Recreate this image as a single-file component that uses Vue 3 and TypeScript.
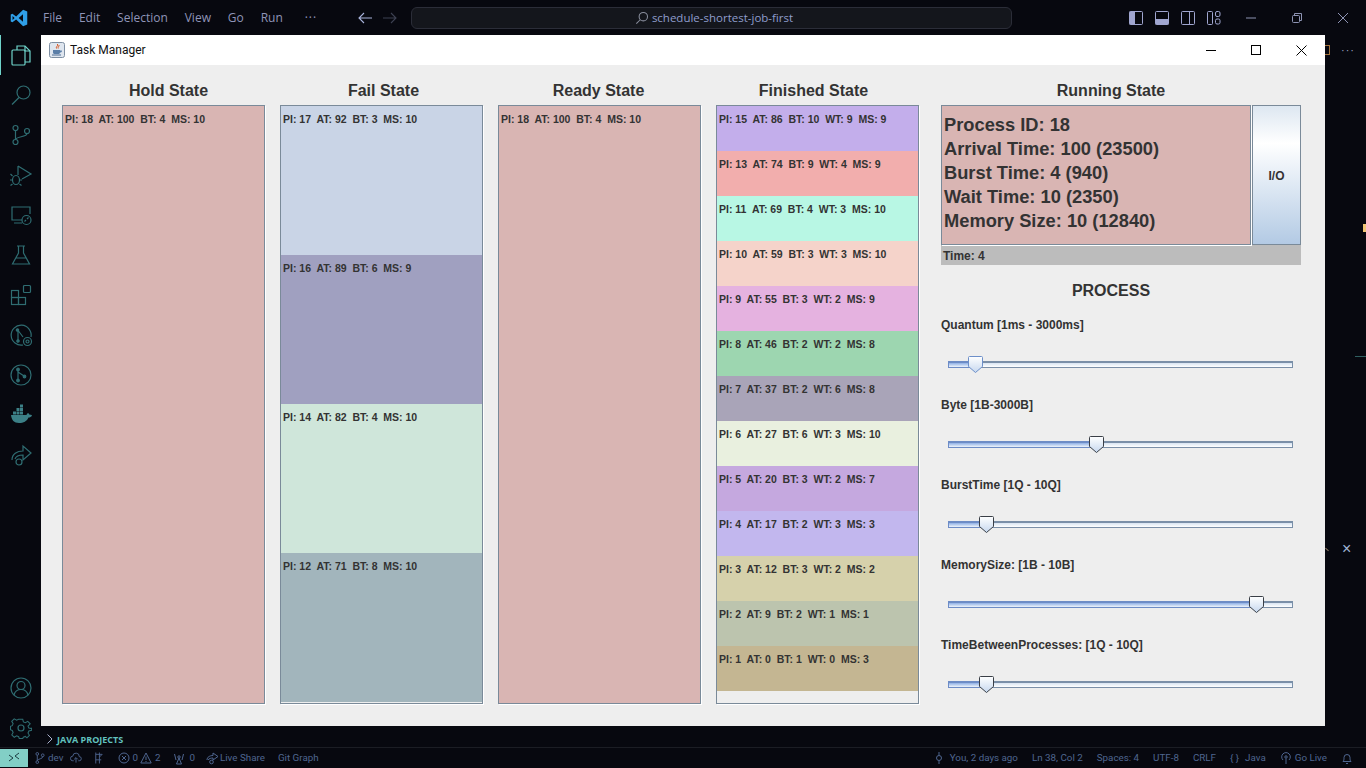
<template>
  <div class="desktop">
    <header class="topbar">
      <svg class="vs-logo" width="18" height="18" viewBox="0 0 24 24">
        <path fill="#2f9fe8" d="M17.5 1 8.200 10 3.200 6.200 1 7.400v9.200l2.200 1.200 5-3.800 9.300 9L23 20.800V3.200L17.500 1ZM3.400 14.800V9.200L6.200 12l-2.800 2.800ZM17.300 17 11.600 12l5.700-5v10Z" />
      </svg>
      <nav class="menu">
        <span v-for="m in menus" :key="m">{{ m }}</span>
        <span class="more">···</span>
      </nav>
      <div class="arrows">
        <svg width="16" height="16" viewBox="0 0 16 16" fill="none" stroke="#a9b4dc" stroke-width="1.1"><path d="M15 8H2M7 3 2 8l5 5" /></svg>
        <svg width="16" height="16" viewBox="0 0 16 16" fill="none" stroke="#3d4152" stroke-width="1.1"><path d="M1 8h13M9 3l5 5-5 5" /></svg>
      </div>
      <div class="command">
        <svg width="14" height="14" viewBox="0 0 16 16" fill="none" stroke="#8a8f9e" stroke-width="1.2"><circle cx="9.500" cy="6.500" r="4.800" /><path d="M6 10 1.500 14.500" /></svg>
        <span>schedule-shortest-job-first</span>
      </div>
      <div class="layout-icons">
        <svg width="16" height="16" viewBox="0 0 16 16"><rect x="1.500" y="1.500" width="13" height="13" rx="1" fill="none" stroke="#a0a6d0" /><rect x="1.500" y="1.500" width="5.500" height="13" fill="#a0a6d0" /></svg>
        <svg width="16" height="16" viewBox="0 0 16 16"><rect x="1.500" y="1.500" width="13" height="13" rx="1" fill="none" stroke="#a0a6d0" /><rect x="1.500" y="9" width="13" height="5.500" fill="#a0a6d0" /></svg>
        <svg width="16" height="16" viewBox="0 0 16 16" fill="none" stroke="#a0a6d0"><rect x="1.500" y="1.500" width="13" height="13" rx="1" /><path d="M9.500 1.500v13" /></svg>
        <svg width="16" height="16" viewBox="0 0 16 16" fill="none" stroke="#a0a6d0"><rect x="1.500" y="1.500" width="5" height="13" rx="1" /><rect x="9.500" y="1.500" width="4.500" height="5" rx="1.500" /><rect x="9.500" y="9" width="4.500" height="5" rx="1.500" /></svg>
      </div>
      <div class="win-controls">
        <svg width="12" height="12" viewBox="0 0 12 12" stroke="#8d93b3" fill="none"><path d="M1 6h10" /></svg>
        <svg width="12" height="12" viewBox="0 0 12 12" stroke="#8d93b3" fill="none"><rect x="1.500" y="3.500" width="7" height="7" rx="1" /><path d="M3.500 3V1.500h7v7H9" /></svg>
        <svg width="12" height="12" viewBox="0 0 12 12" stroke="#8d93b3" fill="none"><path d="m1 1 10 10M11 1 1 11" /></svg>
      </div>
    </header>

    <div class="middle">
      <aside class="activity">
        <div class="activity-top">
          <div class="act act-active">
            <svg width="24" height="24" viewBox="0 0 24 24" fill="none" stroke="#6fd3ca" stroke-width="1.200"><path d="M8 7V3h8l5 5v11h-5" /><path d="M16 3v5h5" /><rect x="3" y="7" width="13" height="15" rx="1" /></svg>
          </div>
          <div class="act"><svg width="24" height="24" viewBox="0 0 24 24" fill="none" stroke="#2f6d72" stroke-width="1.200"><circle cx="14.500" cy="9.500" r="6.500" /><path d="M10 14.500 3 21.500" /></svg></div>
          <div class="act"><svg width="24" height="24" viewBox="0 0 24 24" fill="none" stroke="#2f6d72" stroke-width="1.200"><circle cx="6.500" cy="5" r="2.500" /><circle cx="6.500" cy="19" r="2.500" /><circle cx="18" cy="8" r="2.500" /><path d="M6.500 7.500v9M18 10.500c0 4-11 2.500-11 6" /></svg></div>
          <div class="act"><svg width="24" height="24" viewBox="0 0 24 24" fill="none" stroke="#2f6d72" stroke-width="1.200"><path d="M9 3v9M9 3l13 8-9 5" /><ellipse cx="7" cy="17" rx="3.500" ry="4.500" /><path d="M3.500 17H1M3.500 13 1.500 11M3.500 21l-2 1.500M10.500 17H13M10.500 21l2 1.500" /></svg></div>
          <div class="act"><svg width="24" height="24" viewBox="0 0 24 24" fill="none" stroke="#2f6d72" stroke-width="1.200"><path d="M13 17H3V4h18v7M5 20h8" /><circle cx="17.500" cy="17" r="4.500" /><path d="m15.500 18.500 1.500-1.500m1-1 1.500-1.500" /></svg></div>
          <div class="act"><svg width="24" height="24" viewBox="0 0 24 24" fill="none" stroke="#2f6d72" stroke-width="1.200"><path d="M8 3h8M9.500 3v7L3.500 21h17l-6-11V3M7 15h10" /></svg></div>
          <div class="act"><svg width="24" height="24" viewBox="0 0 24 24" fill="none" stroke="#2f6d72" stroke-width="1.200"><rect x="2.500" y="7.500" width="7" height="7" /><rect x="2.500" y="14.500" width="7" height="7" /><rect x="9.500" y="14.500" width="7" height="7" /><rect x="14.500" y="2.500" width="7" height="7" rx="1" /></svg></div>
          <div class="act"><svg width="24" height="24" viewBox="0 0 24 24" fill="none" stroke="#2f6d72" stroke-width="1.200"><path d="M14 22a10 10 0 1 1 8-8" /><path d="m8 6 6 8M9 8v10" /><circle cx="8.500" cy="7" r="1.200" fill="#2f6d72" /><circle cx="9" cy="18" r="1.200" fill="#2f6d72" /><circle cx="18.500" cy="18.500" r="4" /><circle cx="18.500" cy="18.500" r="1.500" /></svg></div>
          <div class="act"><svg width="24" height="24" viewBox="0 0 24 24" fill="none" stroke="#2f6d72" stroke-width="1.200"><circle cx="12" cy="12" r="10" /><path d="M9 6v12M9 9l6 4" /><circle cx="9" cy="6.500" r="1.300" fill="#2f6d72" /><circle cx="9" cy="17.500" r="1.300" fill="#2f6d72" /><circle cx="15.500" cy="13.500" r="1.300" fill="#2f6d72" /></svg></div>
          <div class="act"><svg width="24" height="24" viewBox="0 0 24 24"><path fill="#3c8087" d="M2 12h15.500c.4-1.500 1.200-2 2-1.700.6.3.9.9 1 1.500 1 0 2 .1 2.500.6-.8 1.500-2 2-3.500 2C18 18 14.500 20 10 20c-5 0-7.500-3-8-8Z" /><path fill="#3c8087" d="M4 8.500h3v3H4zM7.500 8.500h3v3h-3zM11 8.500h3v3h-3zM7.500 5h3v3h-3zM11 5h3v3h-3zM11 1.500h3V4.500h-3z" /></svg></div>
          <div class="act"><svg width="24" height="24" viewBox="0 0 24 24" fill="none" stroke="#2f6d72" stroke-width="1.200"><path d="M3 17c0-6 5-9 11-9V3l8 7-8 7v-5c-4 0-7 1-8 4" /><circle cx="10" cy="19" r="3" /></svg></div>
        </div>
        <div class="activity-bottom">
          <div class="act"><svg width="24" height="24" viewBox="0 0 24 24" fill="none" stroke="#2f6d72" stroke-width="1.200"><circle cx="12" cy="12" r="10" /><circle cx="12" cy="9.500" r="4" /><path d="M5 19c1-4 4-5.500 7-5.500s6 1.500 7 5.500" /></svg></div>
          <div class="act"><svg width="24" height="24" viewBox="0 0 24 24" fill="none" stroke="#2f6d72" stroke-width="1.200"><circle cx="12" cy="12" r="3" /><path d="M10 2h4l.7 3 2.300 1 2.700-1.600 2.800 2.800L20 9.900l1 2.100 3 .7v-1 3l-3 .7-1 2.300 1.600 2.700-2.800 2.800L17 21.600l-2.300 1L14 24h-4l-.7-2-2.300-1-2.700 1.600-2.800-2.800L3 17.100 2 14.800 0 14v-4l2-.7 1-2.300L1.400 4.300l2.800-2.800L7 3.100l2.300-1L10 2Z" transform="translate(1.500 1.500) scale(.875)" /></svg></div>
        </div>
      </aside>

      <div class="editor-bg">
        <div class="side-remnants">
          <div class="tab-icons"><span class="bracket"></span><span class="dots">···</span></div>
          <div class="yellow-mark"></div>
          <div class="dash-mark"></div>
          <div class="panel-close"><span class="caret"></span><span class="close-x">×</span></div>
        </div>
        <div class="java-label">
          <svg width="7" height="10" viewBox="0 0 7 10" fill="none" stroke="#a9b0cc"><path d="m1.500 .5 4.500 4.500-4.500 4.500" /></svg>
          <span>JAVA PROJECTS</span>
        </div>
      </div>
    </div>

    <footer class="statusbar">
      <div class="remote">
        <svg width="12" height="12" viewBox="0 0 12 12" fill="none" stroke="#1b3d42" stroke-width="1"><path d="m1 9 4-3-4-3M11 1 7 4l4 3" /></svg>
      </div>
      <div class="status-left">
        <span class="st s-dev"><svg width="10" height="14" viewBox="0 0 11 14" fill="none" stroke="#4f6690"><circle cx="2.500" cy="2.500" r="1.500" /><circle cx="2.500" cy="11.500" r="1.500" /><circle cx="8.500" cy="4" r="1.500" /><path d="M2.500 4v6M8.500 5.500c0 3-5.500 2-6 4.500" /></svg>dev</span>
        <span class="st s-cloud"><svg width="12" height="12" viewBox="0 0 13 12" fill="none" stroke="#4f6690"><path d="M4 9H3a2.500 2.500 0 0 1 0-5 3.500 3.500 0 0 1 7 .5 2.200 2.200 0 0 1 0 4.500H9M6.500 11V6M4.500 7.500l2-2 2 2" /></svg></span>
        <span class="st s-flag"><svg width="11" height="14" viewBox="0 0 12 14" fill="none" stroke="#4f6690"><path d="M3 1v12M7 1v12M3 3h7l-3 3M3 9h6" /></svg></span>
        <span class="st s-err"><svg width="12" height="12" viewBox="0 0 12 12" fill="none" stroke="#4f6690"><circle cx="6" cy="6" r="5" /><path d="m4 4 4 4M8 4 4 8" /></svg>0<svg class="warn" width="12" height="12" viewBox="0 0 12 12" fill="none" stroke="#4f6690"><path d="M6 1 .8 11h10.400L6 1ZM6 4.500V8M6 9v1" /></svg>2</span>
        <span class="st s-ant"><svg width="12" height="13" viewBox="0 0 12 13" fill="none" stroke="#4f6690"><circle cx="6" cy="5" r="1.200" /><path d="M3 8 1.500 2M9 8l1.500-6M6 6 3.500 12h5L6 6Z" /></svg>0</span>
        <span class="st s-share"><svg width="13" height="13" viewBox="0 0 13 13" fill="none" stroke="#4f6690"><path d="M1 8c0-3 3-4.500 6-4.500V1l5 3.500L7 8V6c-2 0-4 .5-5 2" /><circle cx="5.500" cy="10" r="1.800" /></svg>Live Share</span>
        <span class="st s-git">Git Graph</span>
      </div>
      <div class="status-right">
        <span class="st you"><svg width="10" height="14" viewBox="0 0 10 14" fill="none" stroke="#4f6690"><circle cx="5" cy="7" r="2.500" /><path d="M5 1v3.500M5 9.500V13" /></svg>You, 2 days ago</span>
        <span class="st">Ln 38, Col 2</span>
        <span class="st">Spaces: 4</span>
        <span class="st">UTF-8</span>
        <span class="st">CRLF</span>
        <span class="st braces"><b>{ }</b>Java</span>
        <span class="st"><svg width="12" height="13" viewBox="0 0 12 13" fill="none" stroke="#4f6690"><circle cx="6" cy="5" r="1.200" /><path d="M3 8a4.300 4.300 0 1 1 6 0M6 6.500V12" /></svg>Go Live</span>
        <span class="st"><svg width="12" height="13" viewBox="0 0 12 13" fill="none" stroke="#4f6690"><path d="M2 9.500c1-1 1-2 1-4a3 3 0 0 1 6 0c0 2 0 3 1 4H2ZM5 11.500h2" /></svg></span>
      </div>
    </footer>

    <div class="java-window">
      <div class="titlebar">
        <span class="java-icon">
          <svg width="16" height="16" viewBox="0 0 16 16">
            <rect x=".5" y=".5" width="15" height="15" rx="2" fill="#dfe6ef" stroke="#7e8fa3" />
            <path d="M8.500 2c1 2-2 2.500-1 4.500M10 3c.5 1.500-1.500 2-.8 3.500" fill="none" stroke="#d8541e" stroke-width="1" />
            <path d="M4 8h7v2.500c0 1-1 1.500-2 1.500H6c-1 0-2-.5-2-1.500V8Zm7 .5h1.500c.8 0 .8 2-1.500 2" fill="#5a7ea8" />
            <path d="M3 13h9" stroke="#4a6b92" />
          </svg>
        </span>
        <span class="title-text">Task Manager</span>
        <div class="title-buttons">
          <svg width="10" height="10" viewBox="0 0 10 10" stroke="#000" fill="none"><path d="M0 5.500h10" /></svg>
          <svg width="10" height="10" viewBox="0 0 10 10" stroke="#000" fill="none"><rect x=".5" y=".5" width="9" height="9" /></svg>
          <svg width="11" height="11" viewBox="0 0 11 11" stroke="#000" fill="none"><path d="m.5.500 10 10M10.500.500l-10 10" /></svg>
        </div>
      </div>

      <div class="window-body">
        <section class="queues">
          <div class="queue-titles">
            <h2 v-for="q in queues" :key="q.title">{{ q.title }}</h2>
          </div>
          <div class="queue-panels">
            <div v-for="q in queues" :key="q.title" class="panel">
              <div
                v-for="p in q.items"
                :key="p.text"
                class="proc"
                :style="{ background: p.color, height: q.itemHeight + 'px' }"
              >
                {{ p.text }}
              </div>
            </div>
          </div>
        </section>

        <section class="running">
          <h2 class="running-title">Running State</h2>
          <div class="run-row">
            <div class="run-info">
              <p v-for="l in runLines" :key="l">{{ l }}</p>
            </div>
            <div class="io-btn">I/O</div>
          </div>
          <div class="time-bar">Time: 4</div>
          <h2 class="process-title">PROCESS</h2>
          <div class="sliders">
            <div v-for="s in sliders" :key="s.label" class="slider-block">
              <label>{{ s.label }}</label>
              <div class="track">
                <div class="fill" :style="{ width: s.left + 'px' }"></div>
                <svg class="thumb" :style="{ left: s.left - 9 + 'px' }" width="15" height="17" viewBox="0 0 15 17">
                  <defs>
                    <linearGradient :id="'th' + s.left" x1="0" y1="0" x2="0" y2="1">
                      <stop offset="0" stop-color="#ffffff" />
                      <stop offset="1" stop-color="#c6d8ef" />
                    </linearGradient>
                  </defs>
                  <path
                    d="M1.500.500h12a1 1 0 0 1 1 1V10.500L7.500 16.500.500 10.500V1.500a1 1 0 0 1 1-1Z"
                    :fill="'url(#th' + s.left + ')'"
                    :stroke="s.focus ? '#6d8fc9' : '#3a3f47'"
                  />
                </svg>
              </div>
            </div>
          </div>
        </section>
      </div>
    </div>
  </div>
</template>

<script setup lang="ts">
interface Proc {
  text: string;
  color: string;
}

const menus = ["File", "Edit", "Selection", "View", "Go", "Run"];

const queues: { title: string; itemHeight: number; items: Proc[] }[] = [
  { title: "Hold State", itemHeight: 597, items: [{ text: "PI: 18  AT: 100  BT: 4  MS: 10", color: "#d9b5b3" }] },
  {
    title: "Fail State",
    itemHeight: 149,
    items: [
      { text: "PI: 17  AT: 92  BT: 3  MS: 10", color: "#c9d4e6" },
      { text: "PI: 16  AT: 89  BT: 6  MS: 9", color: "#a0a0c0" },
      { text: "PI: 14  AT: 82  BT: 4  MS: 10", color: "#cfe6da" },
      { text: "PI: 12  AT: 71  BT: 8  MS: 10", color: "#a2b5bc" },
    ],
  },
  { title: "Ready State", itemHeight: 597, items: [{ text: "PI: 18  AT: 100  BT: 4  MS: 10", color: "#d9b5b3" }] },
  {
    title: "Finished State",
    itemHeight: 45,
    items: [
      { text: "PI: 15  AT: 86  BT: 10  WT: 9  MS: 9", color: "#c3aeeb" },
      { text: "PI: 13  AT: 74  BT: 9  WT: 4  MS: 9", color: "#f2aead" },
      { text: "PI: 11  AT: 69  BT: 4  WT: 3  MS: 10", color: "#b8f7e4" },
      { text: "PI: 10  AT: 59  BT: 3  WT: 3  MS: 10", color: "#f5d3ca" },
      { text: "PI: 9  AT: 55  BT: 3  WT: 2  MS: 9", color: "#e5b2e0" },
      { text: "PI: 8  AT: 46  BT: 2  WT: 2  MS: 8", color: "#9dd6b0" },
      { text: "PI: 7  AT: 37  BT: 2  WT: 6  MS: 8", color: "#a9a4b8" },
      { text: "PI: 6  AT: 27  BT: 6  WT: 3  MS: 10", color: "#e9f0df" },
      { text: "PI: 5  AT: 20  BT: 3  WT: 2  MS: 7", color: "#c5a8df" },
      { text: "PI: 4  AT: 17  BT: 2  WT: 3  MS: 3", color: "#c2b7ee" },
      { text: "PI: 3  AT: 12  BT: 3  WT: 2  MS: 2", color: "#d6d1ab" },
      { text: "PI: 2  AT: 9  BT: 2  WT: 1  MS: 1", color: "#bcc4ae" },
      { text: "PI: 1  AT: 0  BT: 1  WT: 0  MS: 3", color: "#c4b692" },
    ],
  },
];

const runLines = [
  "Process ID: 18",
  "Arrival Time: 100 (23500)",
  "Burst Time: 4 (940)",
  "Wait Time: 10 (2350)",
  "Memory Size: 10 (12840)",
];

const sliders = [
  { label: "Quantum [1ms - 3000ms]", left: 28, focus: true },
  { label: "Byte [1B-3000B]", left: 149, focus: false },
  { label: "BurstTime [1Q - 10Q]", left: 39, focus: false },
  { label: "MemorySize: [1B - 10B]", left: 309, focus: false },
  { label: "TimeBetweenProcesses: [1Q - 10Q]", left: 39, focus: false },
];
</script>

<style>
html,
body {
  margin: 0;
  background: #07080f;
}
</style>

<style scoped>
.desktop {
  position: relative;
  width: 1366px;
  height: 768px;
  overflow: hidden;
  background: #07080f;
  display: flex;
  flex-direction: column;
  font-family: "Liberation Sans", Arial, sans-serif;
}

/* vscode chrome */
.topbar {
  height: 35px;
  display: flex;
  align-items: center;
  font-family: "Open Sans", "Noto Sans", sans-serif;
  font-size: 12px;
  color: #8f94b8;
  flex-shrink: 0;
}

.topbar > * {
  flex-shrink: 0;
}

.vs-logo {
  margin-left: 10px;
}

.menu {
  display: flex;
  gap: 16.900px;
  margin-left: 15px;
  width: 300px;
}

.more {
  margin-left: 5px;
  letter-spacing: 1px;
}

.arrows {
  display: flex;
  gap: 9px;
  margin-left: 14px;
}

.command {
  width: 601px;
  height: 22px;
  margin-left: 13px;
  box-sizing: border-box;
  background: #14161c;
  border: 1px solid #2b2d38;
  border-radius: 6px;
  display: flex;
  align-items: center;
  justify-content: center;
  gap: 3px;
  padding-left: 5px;
  font-size: 11.500px;
  color: #8f9dcc;
}

.layout-icons {
  display: flex;
  gap: 10px;
  margin-left: 116px;
}

.win-controls {
  display: flex;
  gap: 34px;
  margin-left: 23px;
}

.middle {
  flex: 1;
  display: flex;
  min-height: 0;
}

.activity {
  width: 41px;
  display: flex;
  flex-direction: column;
  justify-content: space-between;
  flex-shrink: 0;
}

.act {
  width: 41px;
  height: 40px;
  display: flex;
  align-items: center;
  justify-content: center;
  box-sizing: border-box;
}

.act-active {
  border-left: 1px solid #6fd3ca;
}

.activity-bottom {
  margin-bottom: -1px;
}

.editor-bg {
  position: relative;
  flex: 1;
}

.side-remnants {
  position: absolute;
  inset: 0;
}

.tab-icons {
  position: absolute;
  left: 1284px;
  top: 9px;
  display: flex;
  gap: 11px;
  align-items: center;
}

.bracket {
  width: 4px;
  height: 8px;
  border: 1px solid #a5743c;
  border-left: none;
}

.dots {
  color: #9aa0c0;
  font-size: 11px;
  letter-spacing: 1px;
}

.yellow-mark {
  position: absolute;
  left: 1322px;
  top: 189px;
  width: 3px;
  height: 8px;
  background: #f0c674;
}

.dash-mark {
  position: absolute;
  left: 1314px;
  top: 321px;
  width: 11px;
  height: 1px;
  background: #2f5f60;
}

.panel-close {
  position: absolute;
  left: 1284px;
  top: 506px;
  display: flex;
  align-items: center;
  gap: 13px;
  color: #9fb4d4;
}

.caret {
  width: 4px;
  height: 1px;
  background: #8c7a66;
  transform: rotate(40deg);
}

.close-x {
  font-size: 16px;
  line-height: 16px;
}

.java-label {
  position: absolute;
  left: 5px;
  bottom: 0;
  height: 16px;
  display: flex;
  align-items: center;
  gap: 4px;
  font-family: "Open Sans", "Noto Sans", sans-serif;
  font-size: 9px;
  font-weight: 700;
  color: #62c2bf;
}

.statusbar {
  height: 21px;
  flex-shrink: 0;
  box-sizing: border-box;
  border-top: 1px solid #1b1d24;
  padding-top: 1px;
  display: flex;
  align-items: flex-start;
  font-family: Roboto, "Noto Sans", sans-serif;
  font-size: 9.800px;
  line-height: 18px;
  color: #4f6690;
}

.remote {
  width: 28px;
  height: 18px;
  background: #82cfc6;
  display: flex;
  align-items: center;
  justify-content: center;
}

.status-left {
  display: flex;
  align-items: center;
  height: 18px;
}

.status-right {
  display: flex;
  align-items: center;
  height: 18px;
  gap: 14px;
  margin-left: auto;
  margin-right: 13px;
}

.st {
  display: inline-flex;
  align-items: center;
  gap: 3px;
}

.s-dev { margin-left: 7px; }
.s-cloud { margin-left: 7px; }
.s-flag { margin-left: 11px; }
.s-err { margin-left: 14px; gap: 2px; }
.s-ant { margin-left: 13px; gap: 4px; }
.s-share { margin-left: 11px; gap: 1px; }
.s-git { margin-left: 13px; }

.you {
  gap: 6px;
}

.warn {
  margin-right: 1px;
}

.braces b {
  font-weight: 400;
  margin-right: 3px;
}

/* swing window */
.java-window {
  position: absolute;
  left: 41px;
  top: 35px;
  width: 1284px;
  height: 691px;
  background: #eeeeee;
  display: flex;
  flex-direction: column;
}

.titlebar {
  height: 30px;
  flex-shrink: 0;
  background: #ffffff;
  display: flex;
  align-items: center;
  padding-left: 8px;
}

.title-text {
  margin-left: 5px;
  font-family: Roboto, "Noto Sans", sans-serif;
  font-size: 12px;
  color: #111;
}

.java-icon {
  display: flex;
}

.title-buttons {
  margin-left: auto;
  margin-right: 18px;
  display: flex;
  align-items: center;
  gap: 35px;
}

.window-body {
  flex: 1;
  display: flex;
  padding: 0 24px 0 20px;
  color: #333333;
}

.queues {
  width: 860px;
  flex-shrink: 0;
}

h2 {
  margin: 0;
  font-size: 16px;
  font-weight: 700;
  text-align: center;
  line-height: 18px;
}

.queue-titles {
  display: grid;
  grid-template-columns: repeat(4, 215px);
  padding-top: 17px;
  height: 23px;
}

.queue-panels {
  display: grid;
  grid-template-columns: repeat(4, 203px);
  gap: 15px;
  margin-left: 1px;
}

.panel {
  height: 599px;
  box-sizing: border-box;
  border: 1px solid #7a8a99;
  box-shadow: 1px 1px 0 #fff;
  overflow: hidden;
}

.proc {
  box-sizing: border-box;
  padding: 7px 2px 0;
  font-size: 10.500px;
  font-weight: 700;
  line-height: 13px;
  white-space: pre;
  color: #333333;
}

.running {
  width: 360px;
  margin-left: 20px;
}

.running-title {
  padding-top: 17px;
  height: 23px;
  width: 340px;
}

.run-row {
  display: flex;
  height: 140px;
  gap: 1px;
}

.run-info {
  width: 310px;
  box-sizing: border-box;
  background: #d9b5b3;
  border: 1px solid #7a8a99;
  box-shadow: 1px 1px 0 #fff;
  padding: 7px 2px;
}

.run-info p {
  margin: 0;
  font-size: 18.300px;
  font-weight: 700;
  line-height: 24px;
  white-space: nowrap;
}

.io-btn {
  width: 49px;
  box-sizing: border-box;
  border: 1px solid #7a8a99;
  padding-top: 1px;
  background: linear-gradient(to bottom, #dde7f1 0%, #ffffff 27%, #dce7f3 60%, #b3cae4 100%);
  display: flex;
  align-items: center;
  justify-content: center;
  font-size: 12px;
  font-weight: 700;
}

.time-bar {
  height: 20px;
  background: #bcbcbc;
  font-size: 12px;
  font-weight: 700;
  line-height: 22px;
  padding-left: 2px;
}

.process-title {
  width: 340px;
  margin-top: 17px;
}

.sliders {
  margin-top: 18px;
  display: flex;
  flex-direction: column;
}

.slider-block {
  height: 80px;
}

.slider-block label {
  display: block;
  font-size: 12px;
  font-weight: 700;
  line-height: 14px;
}

.track {
  position: relative;
  width: 345px;
  height: 7px;
  box-sizing: border-box;
  margin: 29px 0 0 7px;
  border: 1px solid #7a8fa8;
  border-top-width: 2px;
  background: linear-gradient(to bottom, #d8e4f2, #ffffff);
}

.fill {
  position: absolute;
  left: -1px;
  top: -2px;
  bottom: -1px;
  box-sizing: border-box;
  border: 1px solid #6d8cc6;
  border-top-width: 2px;
  background: linear-gradient(to bottom, #8fb0e6, #eef4fb);
}

.thumb {
  position: absolute;
  top: -7px;
}
</style>
